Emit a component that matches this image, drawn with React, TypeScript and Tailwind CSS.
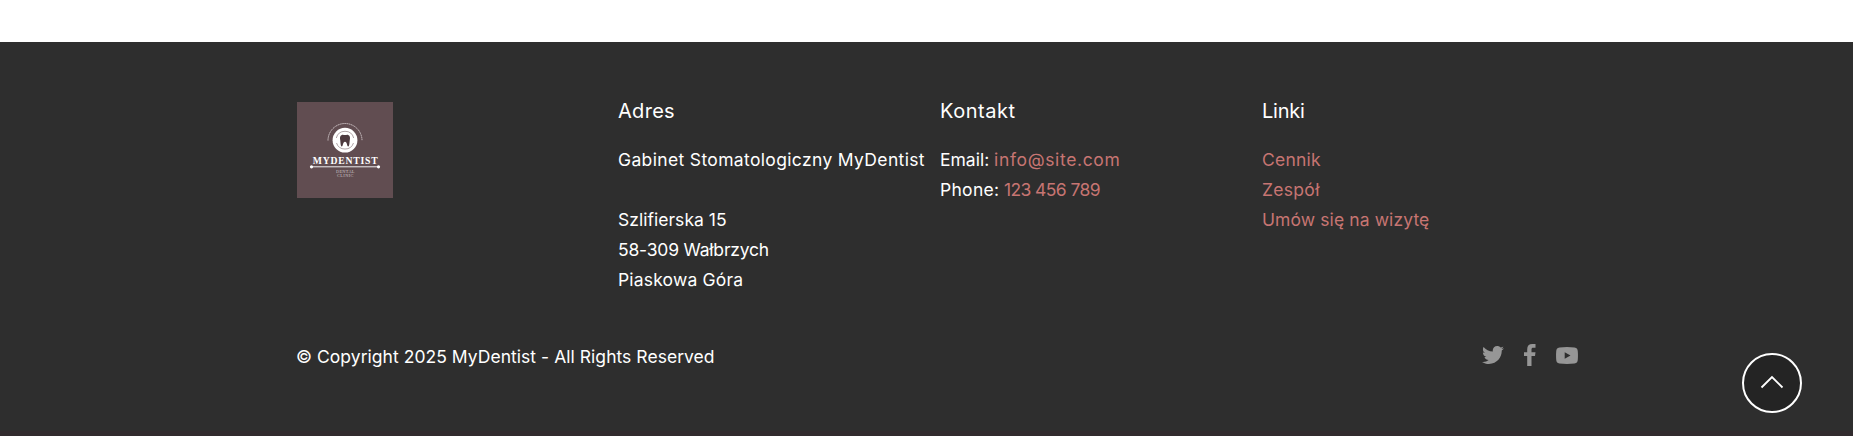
import React from 'react';
import { FaTwitter } from 'react-icons/fa';

function Logo() {
  return (
    <svg width="96" height="96" viewBox="0 0 96 96" className="block bg-[#614d51]" role="img" aria-label="MyDentist">
      <path d="M31 38.5a17 17 0 0 1 34 0" fill="none" stroke="#d8cfd1" strokeWidth="0.9" strokeDasharray="1.4 0.5" />
      <circle cx="48" cy="38.2" r="12.4" fill="#fff" />
      <path d="M39.3 36a9 9 0 0 1 17.4 0M39.5 41a9 9 0 0 0 17 0" fill="none" stroke="#8d7b7f" strokeWidth="0.7" />
      <path
        d="M44.8 33c1.4-.5 2 .1 3.2.1s1.8-.6 3.2-.1c2 .7 2 3 1.6 5-.3 1.5-.2 6.500-1.600 6.500-1.400 0-.9-4.700-3.200-4.700s-1.800 4.700-3.200 4.700c-1.400 0-1.300-5-1.600-6.500-.4-2-.4-4.300 1.600-5z"
        fill="#4d3a3f"
      />
      <text x="15.7" y="61.7" textLength="65" className="fill-white font-['Liberation_Serif',serif] text-[9.7px] font-bold">MYDENTIST</text>
      <path d="M14.5 64.8h67" stroke="#fff" strokeWidth="0.9" />
      <circle cx="14.5" cy="64.8" r="1.6" fill="#fff" />
      <circle cx="81.5" cy="64.8" r="1.6" fill="#fff" />
      <text x="39" y="70.6" textLength="18.5" className="fill-[#cfc5c7] font-['Liberation_Serif',serif] text-[4.4px]">DENTAL</text>
      <text x="40" y="74.8" textLength="16.5" className="fill-[#cfc5c7] font-['Liberation_Serif',serif] text-[4.4px]">CLINIC</text>
    </svg>
  );
}

function Column({ title, titleClass, children }: { title: string; titleClass: string; children: React.ReactNode }) {
  return (
    <div className="w-[322px] shrink-0 whitespace-nowrap">
      <h5 className={`mt-[-6px] mb-[19px] text-[20px] leading-[30px] ${titleClass}`}>{title}</h5>
      {children}
    </div>
  );
}

export default function App() {
  return (
    <div className="relative flex h-[436px] w-full flex-col overflow-hidden bg-white font-['Inter',sans-serif] text-[17.5px] leading-[30px] text-white">
      <footer className="mt-[42px] h-[389px] bg-[#2e2e2e] pt-[60px] pl-[297px]">
        <div className="flex h-[240px]">
          <div className="w-[321px] shrink-0">
            <Logo />
          </div>
          <Column title="Adres" titleClass="tracking-[0.3px]">
            <p className="tracking-[0.35px]">Gabinet Stomatologiczny MyDentist</p>
            <p className="mt-[30px] tracking-[0.03px]">Szlifierska 15</p>
            <p className="tracking-[-0.2px]">58-309 Wałbrzych</p>
            <p className="tracking-[0.18px]">Piaskowa Góra</p>
          </Column>
          <Column title="Kontakt" titleClass="tracking-[0.55px]">
            <p className="flex">
              <span className="w-[54px]">Email:</span>
              <a href="#" className="tracking-[0.65px] text-[#c77572]">info@site.com</a>
            </p>
            <p className="flex">
              <span className="w-[64px] tracking-[0.3px]">Phone:</span>
              <a href="#" className="tracking-[-0.6px] text-[#c77572]">123 456 789</a>
            </p>
          </Column>
          <Column title="Linki" titleClass="tracking-[-0.25px]">
            <ul className="text-[#c77572]">
              <li className="tracking-[0.2px]"><a href="#">Cennik</a></li>
              <li className="tracking-[0.3px]"><a href="#">Zespół</a></li>
              <li className="tracking-[0.1px]"><a href="#">Umów się na wizytę</a></li>
            </ul>
          </Column>
        </div>
        <div className="flex w-[1281px] items-start justify-between">
          <p className="ml-[-1px] whitespace-nowrap tracking-[0.04px]">© Copyright 2025 MyDentist - All Rights Reserved</p>
          <div className="mt-[2px] flex h-[22px] items-center text-[#969696]">
            <FaTwitter className="mr-[20px] h-[22px] w-[22px]" />
            <svg width="12" height="22" viewBox="0 0 12 22" fill="currentColor" className="mr-[20px]">
              <path d="M3.2 22V12H0V8.2h3.2V5.3C3.2 1.8 5 0 8.2 0H11.5v3.8H9.2C7.9 3.8 7.5 4.4 7.5 5.5v2.7h4L11 12H7.5v10z" />
            </svg>
            <svg width="22" height="17" viewBox="0 0 22 17" fill="currentColor">
              <path
                fillRule="evenodd"
                d="M3.5.5Q11-.4 18.5.5C21 .8 21.7 2.3 21.8 4.5q.3 4 0 8c-.1 2.2-.8 3.7-3.3 4q-7.5.9-15 0C1 16.2.3 14.7.2 12.5q-.3-4 0-8C.3 2.3 1 .8 3.5.5zM8.7 5.2v6.6l5.8-3.3z"
              />
            </svg>
          </div>
        </div>
      </footer>
      <div className="h-[5px] bg-[#312b2e]" />
      <a
        href="#"
        aria-label="Do góry"
        className="absolute right-[51px] bottom-[23px] flex h-[60px] w-[60px] items-center justify-center rounded-full border-2 border-white bg-[#242424]"
      >
        <svg width="24" height="14" viewBox="0 0 24 14" fill="none" stroke="#fff" strokeWidth="1.8" className="mt-[-2px]">
          <path d="M1.5 12.5 12 2l10.5 10.5" />
        </svg>
      </a>
    </div>
  );
}
